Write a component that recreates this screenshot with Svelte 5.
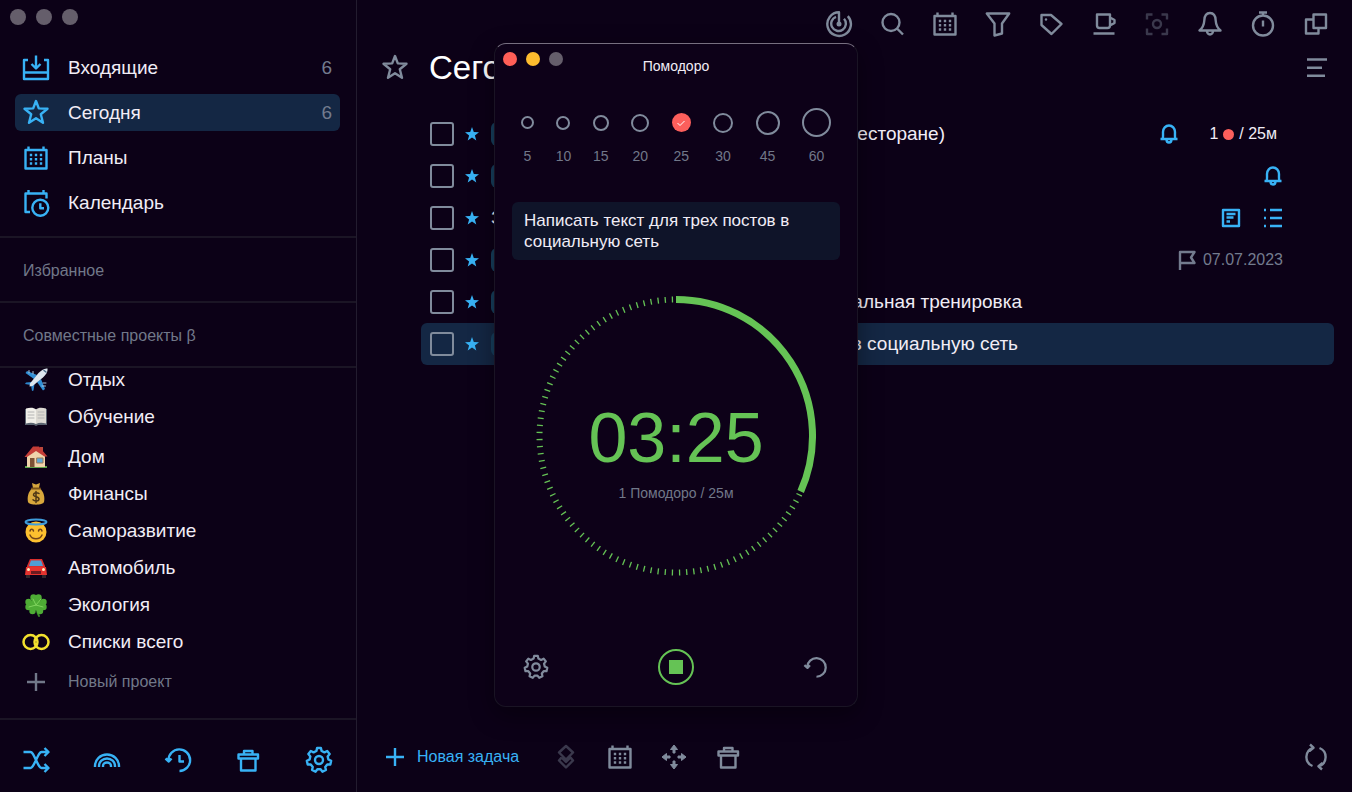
<script>
  let selected = $state("today");
  let minutes = $state(25);

  const nav = [
    { id: "inbox", icon: "inbox", title: "Входящие", count: 6 },
    { id: "today", icon: "star", title: "Сегодня", count: 6 },
    { id: "plans", icon: "calendar", title: "Планы" },
    { id: "calendar", icon: "calclock", title: "Календарь" },
  ];

  const projects = [
    { icon: "plane", title: "Отдых" },
    { icon: "book", title: "Обучение" },
    { icon: "house", title: "Дом", spaced: true },
    { icon: "money", title: "Финансы" },
    { icon: "angel", title: "Саморазвитие" },
    { icon: "car", title: "Автомобиль" },
    { icon: "clover", title: "Экология" },
    { icon: "rings", title: "Списки всего" },
  ];

  const sideTools = [
    ["shuffle", "Перемешать"],
    ["rainbow", "Темы"],
    ["history", "История"],
    ["trash", "Корзина"],
    ["gear", "Настройки"],
  ];

  const topTools = [
    ["radar", "Радар"],
    ["search", "Поиск"],
    ["calendar", "Дата"],
    ["filter", "Фильтр"],
    ["tag", "Метки"],
    ["cup", "Перерыв"],
    ["focus", "Фокус"],
    ["bell", "Напоминания"],
    ["stopwatch", "Таймер"],
    ["windows", "Окна"],
  ];

  const bottomTools = [
    ["layers", "Подзадача"],
    ["calendar", "Дата"],
    ["move", "Переместить"],
    ["trash", "Удалить"],
  ];

  // width: how far the tag and the title reach together
  const tasks = [
    { tag: true, title: "Столик в ресторане)", width: 454, alarm: true, pomodoro: true },
    { tag: true, title: "", width: 90, alarm: true },
    { tag: false, title: "За", width: 90, note: true },
    { tag: true, title: "", width: 90, date: "07.07.2023" },
    { tag: true, title: "Функциональная тренировка", width: 531 },
    { tag: true, title: "Написать текст для трех постов в социальную сеть", width: 527, active: true },
  ];

  const durations = [
    { value: 5, size: 13 },
    { value: 10, size: 14 },
    { value: 15, size: 16 },
    { value: 20, size: 18 },
    { value: 25, size: 19 },
    { value: 30, size: 20 },
    { value: 45, size: 24 },
    { value: 60, size: 29 },
  ];

  const progress = 114;
  const ticks = Array(120).fill(0).map((_, i) => i * 3 + 1.5).filter(a => a > progress);

  function polar(r, deg, c = 14) {
    const a = (deg - 90) * Math.PI / 180;
    return (c + r * Math.cos(a)).toFixed(2) + " " + (c + r * Math.sin(a)).toFixed(2);
  }

  // gear with seven teeth
  const gear = "M" + Array(7).fill(0).map((_, i) => {
    const a = i * 360 / 7;
    return [polar(9.4, a - 16), polar(12.2, a - 9), polar(12.2, a + 9), polar(9.4, a + 16)].join("L");
  }).join("L") + "Z";

  const arc = `M${polar(136.5, 0, 140)}A136.5 136.5 0 0 1 ${polar(136.5, progress, 140)}`;

  const paths = {
    inbox: "M6 6H2V25H26V6H22M2 18.5H26M14 1.5V14M9.5 10L14 14.5L18.5 10",
    star: "M14 2L16.8 9.4L25.5 9.8L18.8 15.2L21 23.8L14 19.2L7 23.8L9.2 15.2L2.5 9.8L11.2 9.4Z",
    calendar: "M3.5 6H24.5V24.5H3.5ZM6.5 6V2.5M21.5 6V2.5M7.8 11H10.2M12.8 11H15.2M17.8 11H20.2M7.8 15.2H10.2M12.8 15.2H15.2M17.8 15.2H20.2M7.8 19.5H10.2M12.8 19.5H15.2M17.8 19.5H20.2",
    calclock: "M8 23H3.5V4.5H24.5V9.5M6.5 4.500V1M21.500 4.500V1M26.300 18.800A8 8 0 1 1 10.300 18.800A8 8 0 1 1 26.300 18.800M18.300 14.300V19.300H22",
    shuffle: "M1.5 6H8.5C10 6 11 7.500 14 14C17 20.500 18 22 19.500 22H26M1.5 22H8.5C10 22 11 20.500 14 14C17 7.500 18 6 19.500 6H26M22.5 2L26.5 6L22.5 10M22.5 18L26.5 22L22.5 26",
    rainbow: "M2 21V20A12 11.500 0 0 1 26 20V21M6 21V20A8 7.5 0 0 1 22 20V21M10 21V20A4 3.5 0 0 1 18 20V21",
    history: "M4.5 14.500A10.800 10.800 0 1 1 15.5 25M1.5 12.500L4.800 15.5L7.500 12.500M15.5 9V15.500H20",
    trash: "M4.5 8.5H24V12.5H4.5ZM10 8V5H18.5V8M7 13V24.5H21.5V13",
    radar: "M14 14V2.3A11.8 11.8 0 1 0 22.8 6.1M11 6.800A7.300 7.300 0 1 0 19 8.800",
    search: "M21.5 12.5A8.5 8.5 0 1 1 4.5 12.5A8.5 8.5 0 1 1 21.5 12.5M19 18.5L25 24.5",
    filter: "M2.8 3.5H25.2L18 13.5V23.5L10.5 25.5V13.5Z",
    tag: "M4.5 5H14L24.5 14L14.5 24L4.5 15Z",
    cup: "M7 4.5H20V15.5A2.5 2.5 0 0 1 17.5 18H9.5A2.5 2.5 0 0 1 7 15.5ZM20 7.5L24.5 10V13L20 15.5M3.5 23.5H24.5",
    focus: "M4 9.5V4.5H9.5M18.5 4.5H24V9.5M24 18.5V24H18.5M9.5 24H4V18.5M18 14A4 4 0 1 1 10 14A4 4 0 1 1 18 14",
    bell: "M14 3C10 3 8.5 6 8.3 10.5C8 15.5 6.5 18 3.5 20.5H24.5C21.5 18 20 15.5 19.7 10.5C19.5 6 18 3 14 3ZM11 21A3 3.5 0 0 0 17 21",
    stopwatch: "M24 15.5A10 10 0 1 1 4 15.5A10 10 0 1 1 24 15.5M10 2.5H18M14 3V5.5M14 10.5V16.5",
    windows: "M11.5 4.5H24V18H11.5ZM11 9.5H4V23.5H16.5V18",
    lines: "M5 5.500H25M5 13.800H20M5 21.800H23",
    alarm: "M5.5 19H22.5M7.500 19C8.300 18 8 15 8 12A6 6.5 0 0 1 20 12C20 15 19.700 18 20.500 19M11.5 19.5A2.5 3 0 0 0 16.5 19.5",
    note: "M6 6H22V22H6ZM9.5 10H18.5M9.5 13.500H16.5M9.5 17.500H13",
    list: "M5 6H7M11 6H23M5 14H7M11 14H23M5 22H7M11 22H23",
    flag: "M7 24V6H21.5L18 11.5L21.5 17H7",
    plus: "M14 5V23M5 14H23",
    layers: "M14 3L21 9.500L14 16.500L7 9.500ZM9.500 14.500L7 17.500L14 24.500L21 17.500L18.500 14.500L14 19L9.500 14.500",
    refresh: "M17.500 5A9.700 9.700 0 0 1 17 23.200M20.500 20L16.500 23.300L20 26.500M10.500 23A9.700 9.700 0 0 1 11 4.800M7.500 8L11.500 4.700L8 1.500",
    undo: "M4.5 14A10 10 0 1 1 14.5 24.500M1.500 12L4.800 15L7.500 12",
    gear: gear + "M18 14A4 4 0 1 1 10 14A4 4 0 1 1 18 14",
  };
</script>

{#snippet icon(name)}
  <svg class="icon" viewBox="0 0 28 28" aria-hidden="true">
    {#if name === "move"}
      <g fill="currentColor" stroke-width="1">
        <path d="M14 2L17.5 6.5H15V10H13V6.5H10.5Z" />
        <path d="M14 26L17.5 21.5H15V18H13V21.5H10.5Z" />
        <path d="M2 14L6.5 10.5V13H10V15H6.5V17.5Z" />
        <path d="M26 14L21.5 10.5V13H18V15H21.5V17.5Z" />
      </g>
    {:else}
      <path d={paths[name]} />
      {#if name === "tag"}<circle cx="9" cy="9.5" r="1.2" fill="currentColor" stroke="none" />{/if}
      {#if name === "radar"}<circle cx="14" cy="14" r="2.5" fill="currentColor" stroke="none" />{/if}
    {/if}
  </svg>
{/snippet}

{#snippet emoji(name)}
  <svg class="emoji" viewBox="0 0 28 28" aria-hidden="true">
    {#if name === "plane"}
      <path d="M15 9L5 5L3.5 7L12 13ZM19 13L23 23L21 24.5L15 16Z" fill="#2f8fd6" />
      <path d="M10 16L4 16.5L3 18L9 19L10 25L11.5 24.5L12.5 18Z" fill="#2d86cc" />
      <path d="M25.5 2.5C22 2 19 4.5 16.5 7L8 17.5L7.5 20.5L10.5 20L21 11.5C23.5 9 26 6 25.5 2.5Z" fill="#dde6ee" />
      <path d="M22 4.5L24 6" stroke="#4b6c8a" stroke-width="1.5" />
      <path d="M7 4.5V7M11 5.5V8M21 17H24M20 20H23.5" stroke="#a9c7de" stroke-width="1" />
    {:else if name === "book"}
      <path d="M3 6H25V22H16L14 23L12 22H3Z" fill="#5b6470" />
      <path d="M4 5.5C8 4.5 12 4.5 14 6.5V21C11 19.5 8 19.5 4 20.5Z" fill="#f1efe9" />
      <path d="M24 5.5C20 4.5 16 4.5 14 6.5V21C17 19.5 20 19.5 24 20.5Z" fill="#dcd9d2" />
      <path d="M6 9H12M6 12H12M6 15H12M16 9H22M16 12H22M16 15H22" stroke="#b4b4b4" stroke-width="1" />
    {:else if name === "house"}
      <path d="M3 23H25V25H3Z" fill="#5da24a" />
      <path d="M18 4H21V9H18Z" fill="#b9483c" />
      <path d="M5 13L12 5L23 13V24H5Z" fill="#efd3aa" />
      <path d="M2.5 14L11 3.5H17L25.5 13.5H22.5L14 8L5 14Z" fill="#c43d37" />
      <path d="M8 15H12.5V24H8Z" fill="#7d5234" />
      <path d="M15 15H21V20H15Z" fill="#5fa9d6" stroke="#9b7a58" />
    {:else if name === "money"}
      <path d="M10 3L14 4.5L18 3L17 8H11Z" fill="#d6a63e" />
      <path d="M10.500 8H17.5C22 12 23 17 22 22C21 25.5 7 25.5 6 22C5 17 6 12 10.5 8Z" fill="#d9a83c" />
      <path d="M10 8.5H18" stroke="#7b5318" stroke-width="2" />
      <path d="M17 13.5C15 12 11.5 12.5 11.5 14.8C11.5 17.5 17 16 17 19C17 21.5 12.5 21.5 11 19.8M14 11.5V22.5" stroke="#4e3716" stroke-width="1.5" />
    {:else if name === "angel"}
      <circle cx="14" cy="15" r="10.5" fill="#fdc02f" />
      <ellipse cx="14" cy="5" rx="10.5" ry="2.500" stroke="#3f9ddc" stroke-width="2" />
      <path d="M8 14C8.5 11.5 11 11.5 11.5 14M16.5 14C17 11.5 19.5 11.5 20 14M8 18C10 23 18 23 20 18" stroke="#754519" stroke-width="1.5" />
    {:else if name === "car"}
      <path d="M4 20H8V24H4ZM20 20H24V24H20Z" fill="#31262c" />
      <path d="M8 5H20L23 12V21H5V12Z" fill="#d92e2d" />
      <path d="M9 6.5H19L21 12H7Z" fill="#4f9ed5" />
      <path d="M4 13H24L25 21H3Z" fill="#e6332f" />
      <path d="M9 17H19V20H9Z" fill="#6b1b20" />
      <circle cx="6.5" cy="15.5" r="1.5" fill="#fff0c4" />
      <circle cx="21.5" cy="15.5" r="1.5" fill="#fff0c4" />
    {:else if name === "clover"}
      <path d="M14 14C15 19 15 22 17 25" stroke="#398e28" stroke-width="2" />
      <g fill="#4eac35">
        <circle cx="11.5" cy="6.5" r="3.2" /><circle cx="16.5" cy="6.5" r="3.2" />
        <circle cx="6.5" cy="11" r="3.2" /><circle cx="6.5" cy="16" r="3.2" />
        <circle cx="21.5" cy="11" r="3.2" /><circle cx="21.5" cy="16" r="3.2" />
        <circle cx="10.5" cy="20" r="3.2" /><circle cx="18" cy="20" r="3.2" />
        <circle cx="14" cy="13.500" r="6" />
      </g>
      <path d="M14 14L11 8M14 14L19 8M14 14L7 16M14 14L21 16" stroke="#7fd45d" stroke-width="1" />
    {:else}
      <g stroke="#f2e02e" stroke-width="2.5">
        <circle cx="8.5" cy="14" r="7" /><circle cx="19.500" cy="14" r="7" />
      </g>
    {/if}
  </svg>
{/snippet}

<div class="app">
  <aside>
    <div class="lights"><i></i><i></i><i></i></div>

    <nav>
      {#each nav as item}
        <button class="nav-item" class:active={selected === item.id} onclick={() => (selected = item.id)}>
          {@render icon(item.icon)}
          <span class="label">{item.title}</span>
          {#if item.count}<span class="count">{item.count}</span>{/if}
        </button>
      {/each}
    </nav>

    <h2>Избранное</h2>
    <h2>Совместные проекты β</h2>

    <div class="projects">
      {#each projects as p}
        <button class="project" class:spaced={p.spaced}>
          {@render emoji(p.icon)}
          <span>{p.title}</span>
        </button>
      {/each}
      <button class="project spaced new">
        {@render icon("plus")}
        <span>Новый проект</span>
      </button>
    </div>

    <footer>
      {#each sideTools as [name, title]}
        <button aria-label={title}>{@render icon(name)}</button>
      {/each}
    </footer>
  </aside>

  <main>
    <div class="toolbar">
      {#each topTools as [name, title]}
        <button aria-label={title} class:dim={name === "focus"}>{@render icon(name)}</button>
      {/each}
    </div>

    <header>
      {@render icon("star")}
      <h1>Сегодня</h1>
      <button aria-label="Меню">{@render icon("lines")}</button>
    </header>

    <ul>
      {#each tasks as task, i}
        <li class:active={task.active}>
          <input type="checkbox" aria-label={"Задача " + (i + 1)} />
          <svg class="mark" viewBox="0 0 16 16" aria-hidden="true">
            <path d="M8 1L9.8 6L15 6.2L10.9 9.4L12.3 14.5L8 11.6L3.7 14.5L5.1 9.4L1 6.2L6.2 6Z" />
          </svg>
          <div class="body" style="width: {task.width}px">
            {#if task.tag}<span class="pill"></span>{/if}
            {#if task.title}<span class="title">{task.title}</span>{/if}
          </div>
          <div class="meta">
            {#if task.alarm}{@render icon("alarm")}{/if}
            {#if task.pomodoro}<span class="pomo">1 <i></i> / 25м</span>{/if}
            {#if task.note}{@render icon("note")}{@render icon("list")}{/if}
            {#if task.date}<span class="date">{@render icon("flag")}{task.date}</span>{/if}
          </div>
        </li>
      {/each}
    </ul>

    <div class="bottom">
      <button class="add">{@render icon("plus")}<span>Новая задача</span></button>
      {#each bottomTools as [name, title]}
        <button aria-label={title} class:dim={name === "layers"}>{@render icon(name)}</button>
      {/each}
      <button class="sync" aria-label="Синхронизация">{@render icon("refresh")}</button>
    </div>
  </main>

  <section class="pomodoro">
    <div class="titlebar">
      <div class="lights small"><i class="red"></i><i class="yellow"></i><i></i></div>
      <h3>Помодоро</h3>
    </div>

    <div class="durations">
      {#each durations as d}
        <label style="width: {d.size}px">
          <span class="dot">
            <input type="radio" name="minutes" value={d.value} bind:group={minutes} style="width: {d.size}px; height: {d.size}px" />
            {#if minutes === d.value}
              <svg class="check" viewBox="0 0 10 10" aria-hidden="true"><path d="M1.5 5L4 7.5L8.5 3" /></svg>
            {/if}
          </span>
          {d.value}
        </label>
      {/each}
    </div>

    <p class="current">Написать текст для трех постов в социальную сеть</p>

    <div class="dial">
      <svg viewBox="0 0 280 280" aria-hidden="true">
        {#each ticks as a}
          <line x1="140" y1="0.5" x2="140" y2="6.5" transform="rotate({a} 140 140)" />
        {/each}
        <path d={arc} />
      </svg>
      <div class="time">03:25</div>
      <div class="total">1 Помодоро / 25м</div>
    </div>

    <div class="controls">
      <button aria-label="Настройки">{@render icon("gear")}</button>
      <button class="stop" aria-label="Стоп"><i></i></button>
      <button aria-label="Сбросить">{@render icon("undo")}</button>
    </div>
  </section>
</div>

<style>
:global(body) {
  background: #0c0117;
}

.app {
  position: relative;
  display: flex;
  min-height: 100vh;
  background: #0c0117;
  color: #f1edf6;
  font-family: "Liberation Sans", Arial, sans-serif;
  font-size: 19px;
}

.app * {
  box-sizing: border-box;
}

button {
  display: flex;
  align-items: center;
  padding: 0;
  border: 0;
  background: none;
  color: inherit;
  font: inherit;
  cursor: pointer;
}

h1, h2, h3, p, ul {
  margin: 0;
  padding: 0;
  font-weight: 400;
}

.icon, .emoji {
  display: block;
  flex: none;
  width: 28px;
  height: 28px;
  fill: none;
}

.icon {
  stroke: currentColor;
  stroke-width: 2.4;
  stroke-linejoin: round;
}

.emoji {
  stroke-linecap: round;
}

/* sidebar */
aside {
  display: flex;
  flex-direction: column;
  flex: none;
  width: 357px;
  border-right: 1px solid #231c2f;
}

.lights {
  display: flex;
  gap: 10px;
  padding: 9px 10px;
}

.lights i {
  width: 16px;
  height: 16px;
  border-radius: 50%;
  background: #655e6b;
}

nav {
  display: flex;
  flex-direction: column;
  gap: 8px;
  padding: 15px 16px 15px 15px;
  height: 202px;
}

.nav-item {
  height: 37px;
  padding: 0 8px 0 7px;
  border-radius: 6px;
  color: #38b2f5;
}

.nav-item.active {
  background: #142744;
}

.label {
  flex: 1;
  margin-left: 18px;
  color: #f1edf6;
  text-align: left;
}

.count {
  color: #737b8e;
}

h2 {
  height: 65px;
  padding-left: 23px;
  border-top: 2px solid #1b1525;
  color: #717889;
  font-size: 16px;
  line-height: 65px;
}

.projects {
  flex: 1;
  overflow: hidden;
  padding-bottom: 16px;
  border-top: 2px solid #1b1525;
}

.project {
  width: 100%;
  height: 37px;
  padding-left: 22px;
  gap: 18px;
}

.project:first-child {
  margin-top: -7px;
}

.spaced {
  margin-top: 3px;
}

.new {
  color: #717889;
  font-size: 16px;
}

footer {
  display: flex;
  justify-content: space-between;
  padding: 26px 23px 18px 22px;
  border-top: 2px solid #1b1525;
  color: #38b2f5;
}

/* main */
main {
  display: flex;
  flex: 1;
  flex-direction: column;
  min-width: 0;
  padding-top: 10px;
  color: #808b9c;
}

.toolbar {
  display: flex;
  justify-content: flex-end;
  gap: 25px;
  padding-right: 22px;
}

.dim {
  opacity: 0.4;
}

header {
  display: flex;
  align-items: center;
  height: 60px;
  padding: 0 22px 0 24px;
}

h1 {
  flex: 1;
  margin-left: 20px;
  color: #fff;
  font-size: 33px;
}

ul {
  flex: 1;
  padding: 15px 18px 0 64px;
  list-style: none;
}

li {
  display: flex;
  align-items: center;
  height: 42px;
  padding: 0 47px 0 9px;
  border-radius: 6px;
}

li.active {
  background: #142744;
}

li input {
  appearance: none;
  flex: none;
  width: 24px;
  height: 24px;
  margin: 0;
  border: 2px solid #808b9c;
  border-radius: 3px;
}

.mark {
  flex: none;
  width: 16px;
  height: 16px;
  margin: 0 11px 0 10px;
  fill: #38b2f5;
}

.body {
  display: flex;
  align-items: center;
  gap: 12px;
}

.pill {
  flex: 1;
  height: 24px;
  border-radius: 6px;
  background: #17405f;
}

.title {
  color: #f1edf6;
  line-height: 24px;
  white-space: nowrap;
}

.meta {
  display: flex;
  align-items: center;
  gap: 14px;
  margin-left: auto;
  color: #38b2f5;
}

.pomo {
  display: flex;
  align-items: center;
  gap: 5px;
  margin: 0 10px 0 12px;
  color: #f1edf6;
  font-size: 16px;
}

.pomo i {
  width: 11px;
  height: 11px;
  border-radius: 50%;
  background: #fc5f5c;
}

.date {
  display: flex;
  align-items: center;
  gap: 2px;
  margin-right: 4px;
  color: #737b8e;
  font-size: 16px;
}

.bottom {
  display: flex;
  align-items: center;
  gap: 26px;
  height: 71px;
  padding: 0 22px 0 24px;
}

.add {
  gap: 8px;
  margin-right: 7px;
  color: #38b2f5;
  font-size: 16px;
}

.sync {
  margin-left: auto;
}

/* timer window lying over the task list */
.pomodoro {
  position: absolute;
  top: 43px;
  left: 50%;
  width: 364px;
  margin-left: -182px;
  padding: 0 18px 21px;
  border: 1px solid #1a1424;
  border-top-color: #776f80;
  border-radius: 12px;
  background: #0d0118;
  box-shadow: 0 8px 24px rgba(0, 0, 0, 0.4);
}

.titlebar {
  height: 64px;
}

.small {
  position: absolute;
  top: 8px;
  left: 8px;
  gap: 9px;
  padding: 0;
}

.small i {
  width: 14px;
  height: 14px;
}

.small .red {
  background: #ff5f57;
}

.small .yellow {
  background: #fdbc2e;
}

h3 {
  padding-top: 13px;
  font-size: 14px;
  line-height: 18px;
  text-align: center;
}

.durations {
  display: flex;
  justify-content: space-between;
  padding: 0 8px;
  color: #717889;
  font-size: 14px;
}

.durations label {
  display: flex;
  flex-direction: column;
  align-items: center;
  gap: 11px;
}

.dot {
  position: relative;
  display: flex;
  align-items: center;
  height: 29px;
}

.dot input {
  appearance: none;
  margin: 0;
  border: 2px solid #808b9c;
  border-radius: 50%;
}

.dot input:checked {
  border: 0;
  background: #fc5f5c;
}

.check {
  position: absolute;
  top: 50%;
  left: 50%;
  width: 10px;
  height: 10px;
  margin: -5px;
  fill: none;
  stroke: #fff;
  stroke-width: 1;
  pointer-events: none;
}

.current {
  margin: 38px -1px 36px;
  padding: 8px 12px;
  border-radius: 6px;
  background: #0f1429;
  font-size: 17px;
  line-height: 21px;
}

.dial {
  display: flex;
  flex-direction: column;
  align-items: center;
  position: relative;
  width: 280px;
  height: 280px;
  margin: 0 auto;
  padding-top: 102px;
}

.dial svg {
  position: absolute;
  top: 0;
  left: 0;
  fill: none;
  stroke: #65c355;
}

.dial path {
  stroke-width: 7;
}

.dial line {
  stroke-width: 1.3;
}

.time {
  color: #65c355;
  font-size: 70px;
  line-height: 80px;
}

.total {
  margin-top: 6px;
  color: #717889;
  font-size: 14px;
  line-height: 18px;
}

.controls {
  display: flex;
  align-items: center;
  justify-content: space-between;
  margin-top: 73px;
  padding: 0 10px;
  color: #808b9c;
}

.controls .icon {
  width: 26px;
  height: 26px;
}

.stop {
  justify-content: center;
  width: 36px;
  height: 36px;
  border: 2px solid #65c355;
  border-radius: 50%;
}

.stop i {
  width: 14px;
  height: 14px;
  background: #65c355;
}
</style>
